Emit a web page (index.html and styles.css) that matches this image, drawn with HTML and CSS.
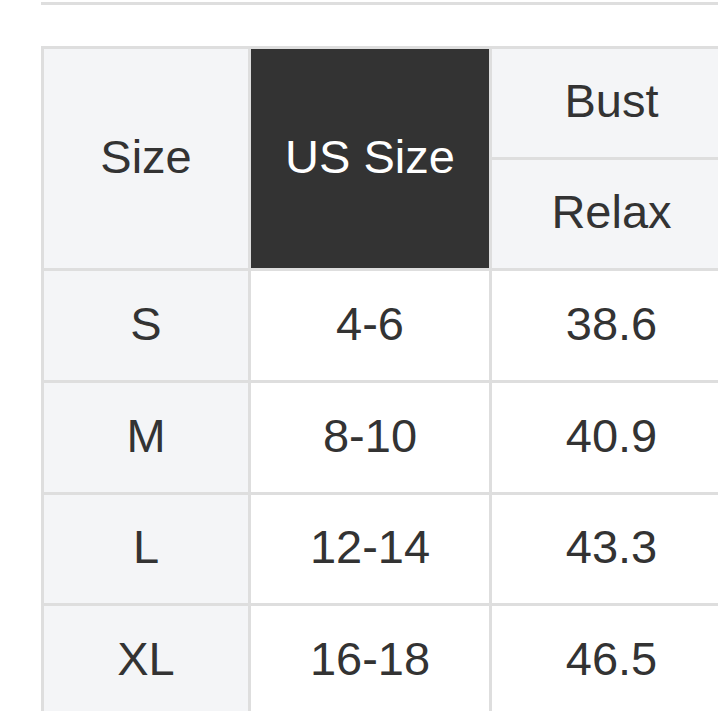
FILE: index.html
```html
<!DOCTYPE html>
<html lang="en">
<head>
<meta charset="utf-8">
<title>Size chart</title>
<link rel="stylesheet" href="styles.css">
</head>
<body>
<div class="page">
  <div class="rule"></div>
  <div class="chart" role="table">
    <div class="cell head c1 span2" role="columnheader">Size</div>
    <div class="cell dark span2" role="columnheader">US Size</div>
    <div class="cell head" role="columnheader">Bust</div>
    <div class="cell head" role="columnheader">Relax</div>

    <div class="cell head" role="rowheader">S</div>
    <div class="cell" role="cell">4-6</div>
    <div class="cell" role="cell">38.6</div>

    <div class="cell head" role="rowheader">M</div>
    <div class="cell" role="cell">8-10</div>
    <div class="cell" role="cell">40.9</div>

    <div class="cell head" role="rowheader">L</div>
    <div class="cell" role="cell">12-14</div>
    <div class="cell" role="cell">43.3</div>

    <div class="cell head" role="rowheader">XL</div>
    <div class="cell" role="cell">16-18</div>
    <div class="cell" role="cell">46.5</div>
  </div>
</div>
</body>
</html>
```
FILE: styles.css
```css
html, body {
  margin: 0;
  padding: 0;
  overflow: hidden;
  background: #fff;
}

.page {
  box-sizing: border-box;
  width: 718px;
  height: 711px;
  overflow: hidden;
  padding: 2px 0 0 41px;
  font-family: "Liberation Sans", Arial, sans-serif;
  color: #333;
}

.rule {
  height: 3px;
  background: #dedede;
}

.chart {
  margin-top: 41px;
  display: grid;
  grid-template-columns: 204px 238px 239px;
  grid-template-rows: 108px 108px 109px 109px 108px 109px;
  gap: 3px;
  padding: 3px;
  width: max-content;
  background: #dedede;
}

.cell {
  box-sizing: border-box;
  display: flex;
  align-items: center;
  justify-content: center;
  padding-bottom: 5px;
  background: #fff;
  font-size: 47px;
  line-height: 1;
}

.head {
  background: #f4f5f7;
}

.span2 {
  grid-row: span 2;
}

.dark {
  background: #333;
  color: #fff;
}
```
